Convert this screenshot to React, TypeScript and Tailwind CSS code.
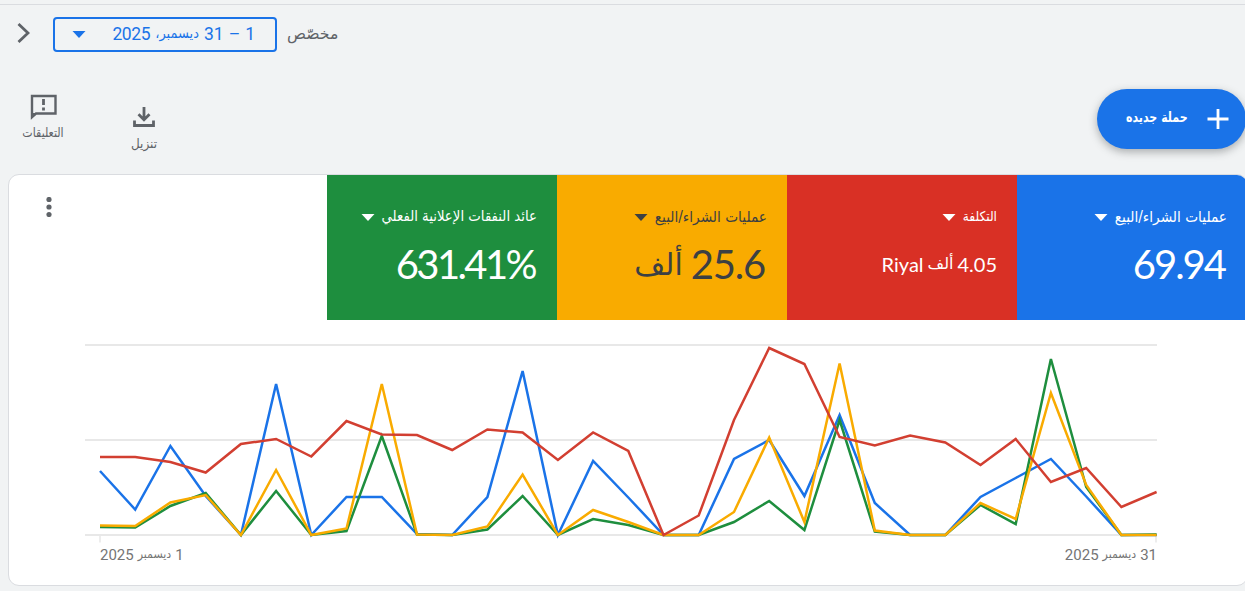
import clsx from "clsx";

type Metric = { label: string; labelCls: string; value: string; valueCls?: string; unit?: string; bg: string; small?: boolean };

const metrics: Metric[] = [
  { label: "عمليات الشراء/البيع", labelCls: "text-[13.7px]", value: "69.94", valueCls: "tracking-[-2px]", bg: "bg-[#1a73e8] text-white" },
  { label: "التكلفة", labelCls: "text-[12.2px]", value: "4.05", unit: "ألف", bg: "bg-[#d93025] text-white", small: true },
  { label: "عمليات الشراء/البيع", labelCls: "text-[13.7px]", value: "25.6", valueCls: "tracking-[-1.2px]", unit: "ألف", bg: "bg-[#f9ab00] text-[#3c4043]" },
  { label: "عائد النفقات الإعلانية الفعلي", labelCls: "text-[13.3px]", value: "631.41%", valueCls: "tracking-[-2.6px]", bg: "bg-[#1e8e3e] text-white" },
];

// one value per day, in chart pixels
const series = [
  { color: "#1a73e8", ys: [131, 169.5, 106, 156, 195, 44, 195, 157, 157, 194, 195, 157, 31, 195, 121, 157.5, 195, 195, 119, 100, 156, 75, 163, 195, 195, 157, 138, 119, 156.5, 195, 195] },
  { color: "#1e8e3e", ys: [187, 187.5, 166, 153, 195, 151, 195, 191, 96, 194.5, 195, 189.5, 156, 195, 179, 185, 195, 195, 182, 161, 190, 80, 191.5, 195, 195, 165, 184, 19, 147, 195, 194.5] },
  { color: "#f9ab00", ys: [185.5, 186, 162.5, 155, 195, 130, 195, 188.5, 44, 194.5, 195, 186.5, 134.5, 195, 170, 182, 195, 195, 172, 97.5, 182, 23.5, 190.5, 195, 195, 163, 179, 53, 145, 195, 195] },
  { color: "#d23f31", ys: [117, 117, 122, 132.5, 104, 99, 116.5, 81, 94.5, 95, 110, 89.5, 92.5, 120, 92.5, 111, 195, 175.5, 80, 8, 24, 97, 105.5, 95.5, 102.5, 125, 99, 142, 128, 167, 152] },
];

const toPoints = (ys: number[]) => ys.map((y, i) => `${(15 + i * 35.22).toFixed(1)},${y}`).join(" ");

function Caret({ className }: { className?: string }) {
  return (
    <svg viewBox="0 0 14 7" className={clsx("h-[7px] w-[14px] shrink-0 fill-current", className)}>
      <path d="M0.5 0h13L7 7z" />
    </svg>
  );
}

function Tile({ label, labelCls, value, valueCls, unit, bg, small }: Metric) {
  return (
    <div className={clsx("flex h-[145px] w-[230px] shrink-0 flex-col pr-5", bg)}>
      <div className="mt-[30px] flex h-6 items-center gap-[7px] whitespace-nowrap">
        <span className={clsx("scale-y-110 font-['DejaVu_Sans']", labelCls)}>{label}</span>
        <Caret className="mt-px" />
      </div>
      <div className={clsx("mt-[11px] flex h-12 items-center whitespace-nowrap font-['Lato']", small ? "gap-1 text-[20px]" : "gap-2 pr-[2px] text-[40px]")}>
        <span className={valueCls}>{value}</span>
        {unit && <span className={clsx("font-['DejaVu_Sans']", small ? "text-[16px]" : "text-[30px]")}>{unit}</span>}
        {small && <span>Riyal</span>}
      </div>
    </div>
  );
}

function DateLabel({ day }: { day: number }) {
  return (
    <div className="flex items-center gap-1 font-['Roboto'] text-[15px] text-[#757575]">
      <span>{day}</span>
      <span className="scale-y-110 font-['DejaVu_Sans'] text-[11px]">ديسمبر</span>
      <span>2025</span>
    </div>
  );
}

function Chart() {
  return (
    <div className="ml-[76px] w-[1072px]">
      <svg viewBox="0 0 1072 204" className="block h-[204px] w-[1072px]" fill="none">
        <g stroke="#e8e8e8" strokeWidth="2">
          <path d="M0 5h1072M0 100h1072M0 195h1072" />
          <path d="M15 195v7.5M1071 195v7.5" strokeWidth="1.5" />
        </g>
        {series.map((s) => (
          <polyline key={s.color} points={toPoints(s.ys)} stroke={s.color} strokeWidth="2.5" />
        ))}
      </svg>
      <div className="flex h-[22px] items-center justify-between pl-[15px]">
        <DateLabel day={31} />
        <DateLabel day={1} />
      </div>
    </div>
  );
}

export default function App() {
  return (
    <div dir="rtl" className="flex h-[591px] w-[1245px] flex-col overflow-hidden bg-[#f1f3f4] text-[#5f6368]">
      <div className="h-[5px] shrink-0 border-b border-[#dadce0]" />

      <div className="flex h-[58px] shrink-0 items-center justify-end pl-[17px]">
        <span className="ml-[10px] font-['DejaVu_Sans'] text-[15.7px]">مخصّص</span>
        <button className="flex h-[35px] w-[224px] items-center justify-between rounded-[4px] border-2 border-[#1a73e8] pr-5 pl-[17px] text-[#1a73e8]">
          <span className="flex items-center gap-[5px] font-['Roboto'] text-[17.5px]">
            <span>1</span>
            <span>–</span>
            <span>31</span>
            <span className="scale-y-110 font-['DejaVu_Sans'] text-[13px]">ديسمبر،</span>
            <span className="tracking-[-0.4px]">2025</span>
          </span>
          <Caret />
        </button>
        <svg viewBox="0 0 13 20" className="mr-[23px] mb-[2px] h-5 w-[13px]" fill="none" stroke="#5f6368" strokeWidth="2.8">
          <path d="M1.5 1L11 10L1.5 19" />
        </svg>
      </div>

      <div className="flex h-[111px] shrink-0 items-start">
        <button className="-mr-px mt-[26px] flex h-[60px] w-[149px] shrink-0 items-center rounded-full bg-[#1a73e8] pr-[17px] text-white shadow-[0_3px_8px_rgba(60,64,67,0.4)]">
          <svg viewBox="0 0 22 22" className="h-[22px] w-[22px] shrink-0" fill="none" stroke="currentColor" strokeWidth="2.8">
            <path d="M11 1v20M0.5 11h21" />
          </svg>
          <span className="mr-[19px] mb-[2px] origin-right scale-x-[0.85] scale-y-110 font-['DejaVu_Sans'] text-[13px] font-bold whitespace-nowrap">حملة جديده</span>
        </button>
        <div className="mr-auto flex items-start pl-[13px]">
          <div className="mt-[43px] flex w-[60px] flex-col items-center">
            <svg viewBox="0 0 22 22" className="h-[22px] w-[22px]" fill="none" stroke="currentColor" strokeWidth="2.8">
              <path d="M11 1v12.5M5.5 8.3l5.5 5.5l5.5-5.5M1.5 14.5v5h19v-5" />
            </svg>
            <span className="mt-[6px] scale-y-110 font-['DejaVu_Sans'] text-[12px] leading-5">تنزيل</span>
          </div>
          <div className="mr-[41px] mt-[31px] flex w-[60px] flex-col items-center">
            <svg viewBox="0 0 27 26" className="h-[26px] w-[27px]" fill="none">
              <path d="M2 2h23.5v17.5H6L2 23z" stroke="currentColor" strokeWidth="2.4" />
              <path d="M1 19h6l-6 6.5z" fill="currentColor" />
              <path d="M13.5 5v6M13.5 13.5v3" stroke="currentColor" strokeWidth="2.8" />
            </svg>
            <span className="mt-1 scale-y-[1.15] font-['DejaVu_Sans'] text-[11px] leading-5">التعليقات</span>
          </div>
        </div>
      </div>

      <div className="mr-[-3px] h-[412px] w-[1240px] shrink-0 overflow-hidden rounded-[11px] border border-[#dadce0] bg-white">
        <div className="flex">
          {metrics.map((m) => (
            <Tile key={m.bg} {...m} />
          ))}
          <svg viewBox="0 0 6 20" className="mt-[22px] mr-auto ml-[37px] h-5 w-[6px] fill-[#5f6368]">
            <circle cx="3" cy="2.5" r="2.6" />
            <circle cx="3" cy="10" r="2.6" />
            <circle cx="3" cy="17.5" r="2.6" />
          </svg>
        </div>
        <div className="mt-5 flex justify-end">
          <Chart />
        </div>
      </div>
    </div>
  );
}
